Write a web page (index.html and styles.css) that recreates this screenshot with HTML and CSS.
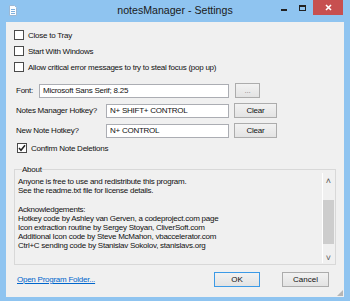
FILE: index.html
```html
<!DOCTYPE html>
<html lang="en">
<head>
  <meta charset="UTF-8">
  <title>notesManager - Settings</title>
  <link rel="stylesheet" href="styles.css">
</head>
<body>
  <div class="window">
    <div class="titlebar">
      <svg class="app-icon" width="8" height="11" viewBox="0 0 8 11">
        <path d="M0.5 0.5 H5.5 L7.5 2.5 V10.5 H0.5 Z" fill="#fbfdff" stroke="#9cb8d4"/>
        <path d="M2 4.5 H6 M2 6.5 H6 M2 8.5 H6" stroke="#7fb0de"/>
      </svg>
      <div class="title">notesManager - Settings</div>
      <div class="controls">
        <span class="ctl-min"></span>
        <span class="ctl-max"></span>
        <span class="ctl-close">
          <svg width="7" height="7" viewBox="0 0 7 7"><path d="M1 1 L6 6 M6 1 L1 6" stroke="#fff" stroke-width="1.6"/></svg>
        </span>
      </div>
    </div>

    <div class="client">
      <label class="check"><span class="box"></span>Close to Tray</label>
      <label class="check"><span class="box"></span>Start With Windows</label>
      <label class="check"><span class="box"></span>Allow critical error messages to try to steal focus (pop up)</label>

      <div class="row row-font">
        <span class="lbl lbl-short">Font:</span>
        <span class="field field-wide">Microsoft Sans Serif; 8.25</span>
        <span class="btn btn-dots">...</span>
      </div>
      <div class="row">
        <span class="lbl">Notes Manager Hotkey?</span>
        <span class="field">N+ SHIFT+ CONTROL</span>
        <span class="btn">Clear</span>
      </div>
      <div class="row">
        <span class="lbl">New Note Hotkey?</span>
        <span class="field">N+ CONTROL</span>
        <span class="btn">Clear</span>
      </div>

      <label class="check check-confirm"><span class="box checked">
        <svg width="8" height="8" viewBox="0 0 8 8"><path d="M1 4 L3 6.3 L7 1.2" fill="none" stroke="#222" stroke-width="1.5"/></svg>
      </span>Confirm Note Deletions</label>

      <fieldset class="about">
        <legend>About</legend>
        <div class="about-box">
          <div class="about-text">
            <p>Anyone is free to use and redistribute this program.</p>
            <p>See the readme.txt file for license details.</p>
            <p>&nbsp;</p>
            <p>Acknowledgements:</p>
            <p>Hotkey code by Ashley van Gerven, a codeproject.com page</p>
            <p>Icon extraction routine by Sergey Stoyan, CliverSoft.com</p>
            <p>Additional Icon code by Steve McMahon, vbaccelerator.com</p>
            <p>Ctrl+C sending code by Stanislav Sokolov, stanislavs.org</p>
          </div>
          <div class="scrollbar">
            <span class="arrow">&#x02C4;</span>
            <span class="thumb"></span>
            <span class="arrow">&#x02C5;</span>
          </div>
        </div>
      </fieldset>

      <div class="footer">
        <a class="link" href="#">Open Program Folder...</a>
        <span class="btn btn-ok">OK</span>
        <span class="btn btn-cancel">Cancel</span>
      </div>
      <div class="grip"></div>
    </div>
  </div>
</body>
</html>
```

FILE: styles.css
```css
* {
  box-sizing: border-box;
}

body {
  margin: 0;
  font-family: 'Liberation Sans', Arial, sans-serif;
  font-size: 8px;
  color: #111;
}

.window {
  width: 350px;
  height: 301px;
  background: #8fc4f0;
  display: flex;
  flex-direction: column;
}

.titlebar {
  height: 22px;
  flex: none;
  display: flex;
  align-items: flex-start;
  position: relative;
}

.app-icon {
  margin: 5px 0 0 9px;
}

.title {
  position: absolute;
  left: 0;
  right: 0;
  top: 4px;
  text-align: center;
  font-size: 10.6px;
  color: #1a1a1a;
}

.controls {
  margin-left: auto;
  margin-right: 7px;
  display: flex;
  align-items: flex-start;
}

.ctl-min {
  width: 6px;
  height: 2px;
  background: #222;
  margin: 9px 12px 0 0;
}

.ctl-max {
  width: 7px;
  height: 6px;
  border: 1px solid #222;
  border-top-width: 2px;
  margin: 5px 7px 0 0;
}

.ctl-close {
  width: 30px;
  height: 15px;
  background: #c75050;
  display: flex;
  align-items: center;
  justify-content: center;
}

.client {
  flex: 1;
  margin: 0 6px 4px;
  background: #f0f0f0;
  padding: 8px 8px 0;
  position: relative;
}

.check {
  display: flex;
  align-items: center;
  height: 10px;
  margin-bottom: 6px;
  letter-spacing: -0.25px;
}

.check .box {
  width: 10px;
  height: 10px;
  border: 1px solid #4a4a4a;
  background: #fff;
  margin-right: 4px;
  display: flex;
  align-items: center;
  justify-content: center;
}

.row {
  display: flex;
  align-items: center;
  height: 15px;
  margin-bottom: 5px;
  padding-left: 2px;
  letter-spacing: -0.25px;
}

.row-font {
  margin-top: 11px;
}

.lbl {
  width: 90px;
}

.lbl-short {
  width: 23px;
}

.field {
  width: 123px;
  height: 14px;
  background: #fff;
  border: 1px solid #abadb3;
  padding: 0 3px;
  line-height: 12px;
  margin-right: 5px;
}

.field-wide {
  width: 190px;
  margin-right: 6px;
}

.btn {
  display: inline-flex;
  align-items: center;
  justify-content: center;
  width: 43px;
  height: 15px;
  border: 1px solid #acacac;
  background: linear-gradient(#f2f2f2, #e3e3e3);
  color: #111;
}

.btn-dots {
  width: 25px;
  color: #888;
}

.check-confirm {
  margin: 0 0 0 3px;
}

.about {
  margin: 12px 0 0;
  padding: 0 1px 1px;
  border: 1px solid #d8d8d8;
  height: 100px;
  width: 322px;
}

.about legend {
  padding: 0;
  margin-left: 6px;
  letter-spacing: -0.25px;
}

.about-box {
  display: flex;
  height: 90px;
  margin-top: -1px;
}

.about-text {
  flex: 1;
  padding: 4px 2px 0;
  letter-spacing: -0.25px;
}

.about-text p {
  margin: 0;
  line-height: 9.2px;
}

.scrollbar {
  width: 12px;
  border-left: 1px solid #fff;
  display: flex;
  flex-direction: column;
  align-items: center;
  color: #555;
  font-size: 9px;
}

.scrollbar .arrow {
  height: 12px;
  line-height: 16px;
}

.scrollbar .thumb {
  width: 11px;
  height: 44px;
  margin: 15px 0 6px;
  background: #cdcdcd;
}

.footer {
  display: flex;
  align-items: center;
  margin-top: 7px;
  padding-left: 3px;
}

.link {
  color: #0066cc;
  letter-spacing: -0.25px;
  margin-right: auto;
}

.btn-ok {
  width: 46px;
  border-color: #3c9ae6;
  margin-right: 22px;
}

.btn-cancel {
  width: 47px;
  margin-right: 7px;
}

.grip {
  position: absolute;
  right: 1px;
  bottom: 1px;
  width: 6px;
  height: 6px;
  background: radial-gradient(circle, #b5b5b5 0.7px, transparent 0.9px) 0 0 / 2px 2px;
  clip-path: polygon(100% 0, 100% 100%, 0 100%);
}
```
